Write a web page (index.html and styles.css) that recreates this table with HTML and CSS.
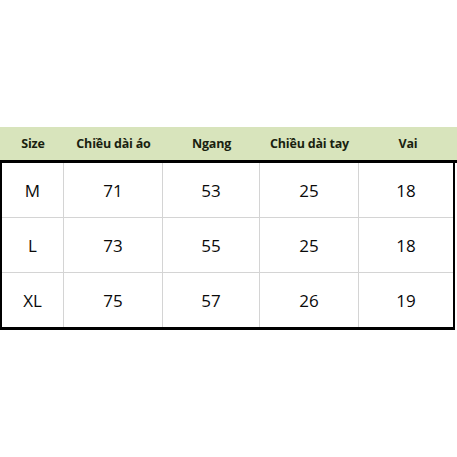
FILE: index.html
```html
<!DOCTYPE html>
<html>
<head>
<meta charset="utf-8">
<link rel="stylesheet" href="styles.css">
</head>
<body>
<div class="page">
  <div class="sheet">
    <div class="head">
      <div class="cell c1">Size</div>
      <div class="cell c2">Chiều dài áo</div>
      <div class="cell c3">Ngang</div>
      <div class="cell c4">Chiều dài tay</div>
      <div class="cell c5">Vai</div>
    </div>
    <div class="body">
      <div class="row">
        <div class="cell c1">M</div><div class="cell c2">71</div><div class="cell c3">53</div><div class="cell c4">25</div><div class="cell c5">18</div>
      </div>
      <div class="row">
        <div class="cell c1">L</div><div class="cell c2">73</div><div class="cell c3">55</div><div class="cell c4">25</div><div class="cell c5">18</div>
      </div>
      <div class="row last">
        <div class="cell c1">XL</div><div class="cell c2">75</div><div class="cell c3">57</div><div class="cell c4">26</div><div class="cell c5">19</div>
      </div>
    </div>
  </div>
</div>
</body>
</html>
```

FILE: styles.css
```css
html, body {
  margin: 0;
  padding: 0;
  background: #ffffff;
}
.page {
  width: 457px;
  height: 457px;
  padding-top: 127px;
  box-sizing: border-box;
  font-family: "Open Sans", "Liberation Sans", sans-serif;
  color: #0a0a0a;
}
.sheet {
  width: 457px;
}
.head {
  display: grid;
  grid-template-columns: 64px 99px 97px 99px 98px;
  height: 33px;
  background: #d8e4bc;
  border-bottom: 3px solid #000000;
  font-weight: 700;
  font-size: 12.5px;
  letter-spacing: -0.2px;
  color: #1a1f10;
}
.head .cell {
  display: flex;
  align-items: center;
  justify-content: center;
}
.head .c1 { padding-left: 2px; }
.body {
  width: 455px;
  box-sizing: border-box;
  border-left: 2px solid #000000;
  border-right: 2px solid #000000;
  border-bottom: 3px solid #000000;
}
.row {
  display: grid;
  grid-template-columns: 62px 99px 97px 99px 1fr;
  height: 55px;
  border-bottom: 1px solid #d4d4d4;
  box-sizing: border-box;
  font-size: 17px;
}
.row.last {
  border-bottom: none;
  height: 54px;
}
.row .cell {
  display: flex;
  align-items: center;
  justify-content: center;
  border-right: 1px solid #d4d4d4;
}
.row .c5 { border-right: none; }
```
